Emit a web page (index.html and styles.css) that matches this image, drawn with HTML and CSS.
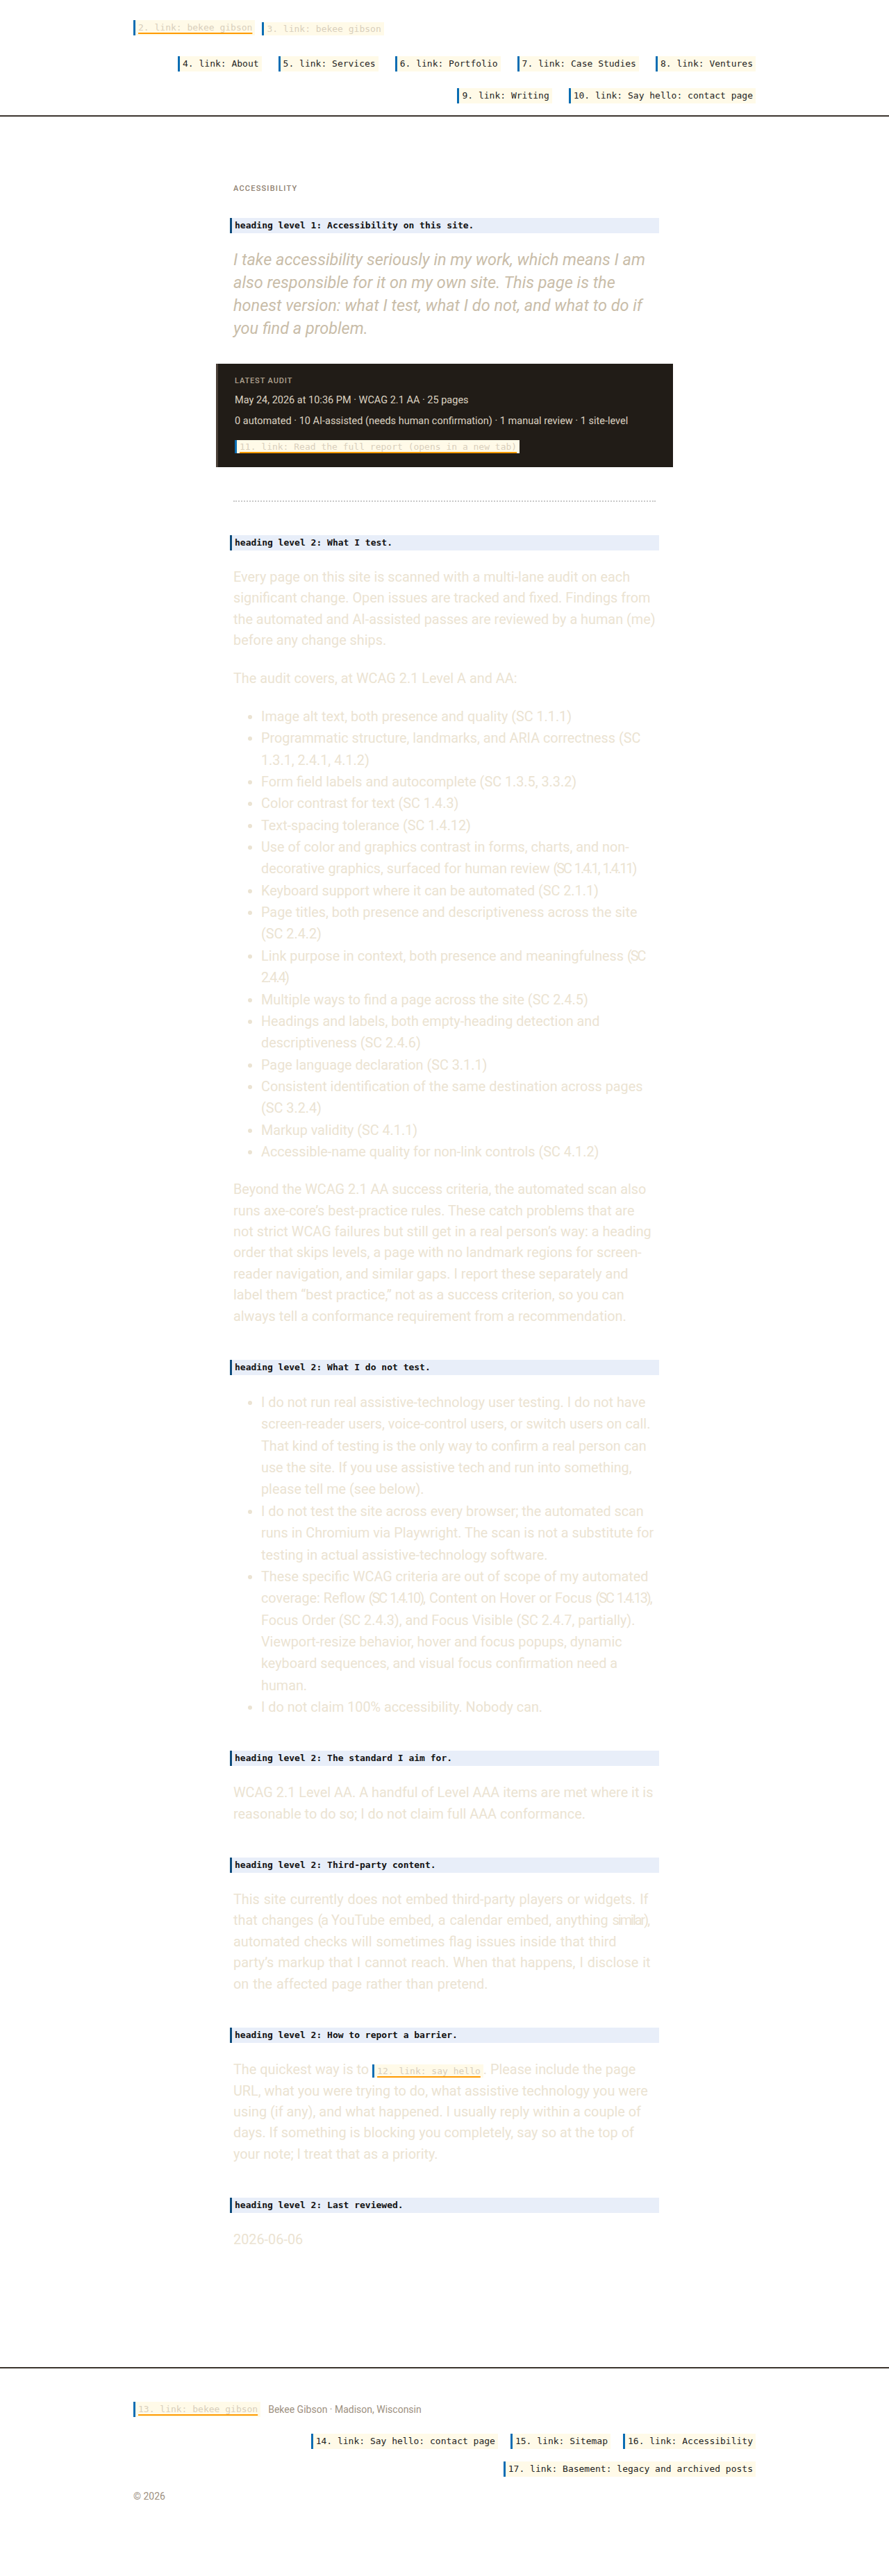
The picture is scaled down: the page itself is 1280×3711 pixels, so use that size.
FILE: index.html
```html
<!DOCTYPE html>
<html lang="en">
<head>
<meta charset="utf-8">
<title>Accessibility on this site</title>
<link rel="stylesheet" href="styles.css">
</head>
<body>
<header class="site-header">
  <div class="wrap">
    <div class="brand">
      <a class="sr-link faded ul" href="#">2. link: bekee gibson</a>
      <a class="sr-link faded brand-text" href="#">3. link: bekee gibson</a>
    </div>
    <nav class="nav">
      <a class="sr-link" href="#">4. link: About</a>
      <a class="sr-link" href="#">5. link: Services</a>
      <a class="sr-link" href="#">6. link: Portfolio</a>
      <a class="sr-link" href="#">7. link: Case Studies</a>
      <a class="sr-link" href="#">8. link: Ventures</a>
      <a class="sr-link" href="#">9. link: Writing</a>
      <a class="sr-link" href="#">10. link: Say hello: contact page</a>
    </nav>
  </div>
</header>

<main class="main">
  <div class="col">
    <p class="eyebrow">Accessibility</p>
    <h1 class="sr-heading">heading level 1: Accessibility on this site.</h1>
    <p class="lead">I take accessibility seriously in my work, which means I am also responsible for it on my own site. This page is the honest version: what I test, what I do not, and what to do if you find a problem.</p>

    <section class="audit">
      <p class="audit-label">Latest audit</p>
      <p class="audit-line">May 24, 2026 at 10:36 PM · WCAG 2.1 AA · 25 pages</p>
      <p class="audit-line second">0 automated · 10 AI-assisted (needs human confirmation) · 1 manual review · 1 site-level</p>
      <p class="audit-link"><a class="sr-link faded ul small" href="#">11. link: Read the full report (opens in a new tab)</a></p>
    </section>

    <hr class="rule">

    <h2 class="sr-heading">heading level 2: What I test.</h2>
    <p>Every page on this site is scanned with a multi-lane audit on each significant change. Open issues are tracked and fixed. Findings from the automated and AI-assisted passes are reviewed by a human (me) before any change ships.</p>
    <p>The audit covers, at WCAG 2.1 Level A and AA:</p>
    <ul>
      <li>Image alt text, both presence and quality (SC 1.1.1)</li>
      <li>Programmatic structure, landmarks, and ARIA correctness (SC 1.3.1, 2.4.1, 4.1.2)</li>
      <li>Form field labels and autocomplete (SC 1.3.5, 3.3.2)</li>
      <li>Color contrast for text (SC 1.4.3)</li>
      <li>Text-spacing tolerance (SC 1.4.12)</li>
      <li>Use of color and graphics contrast in forms, charts, and non-decorative graphics, surfaced for human review <span class="num">(SC 1.4.1, 1.4.11)</span></li>
      <li>Keyboard support where it can be automated (SC 2.1.1)</li>
      <li>Page titles, both presence and descriptiveness across the site (SC 2.4.2)</li>
      <li>Link purpose in context, both presence and meaningfulness <span class="num">(SC 2.4.4)</span></li>
      <li>Multiple ways to find a page across the site (SC 2.4.5)</li>
      <li>Headings and labels, both empty-heading detection and descriptiveness (SC 2.4.6)</li>
      <li>Page language declaration (SC 3.1.1)</li>
      <li>Consistent identification of the same destination across pages (SC 3.2.4)</li>
      <li>Markup validity (SC 4.1.1)</li>
      <li>Accessible-name quality for non-link controls (SC 4.1.2)</li>
    </ul>
    <p>Beyond the WCAG 2.1 AA success criteria, the automated scan also runs axe-core’s best-practice rules. These catch problems that are not strict WCAG failures but still get in a real person’s way: a heading order that skips levels, a page with no landmark regions for screen-reader navigation, and similar gaps. I report these separately and label them “best practice,” not as a success criterion, so you can always tell a conformance requirement from a recommendation.</p>

    <h2 class="sr-heading">heading level 2: What I do not test.</h2>
    <ul>
      <li>I do not run real assistive-technology user testing. I do not have screen-reader users, voice-control users, or switch users on call. That kind of testing is the only way to confirm a real person can use the site. If you use assistive tech and run into something, please tell me (see below).</li>
      <li>I do not test the site across every browser; the automated scan runs in Chromium via Playwright. The scan is not a substitute for testing in actual assistive-technology software.</li>
      <li>These specific WCAG criteria are out of scope of my automated coverage: Reflow <span class="num">(SC 1.4.10)</span>, Content on Hover or Focus <span class="num">(SC 1.4.13)</span>, Focus Order (SC 2.4.3), and Focus Visible (SC 2.4.7, partially). Viewport-resize behavior, hover and focus popups, dynamic keyboard sequences, and visual focus confirmation need a human.</li>
      <li>I do not claim 100% accessibility. Nobody can.</li>
    </ul>

    <h2 class="sr-heading">heading level 2: The standard I aim for.</h2>
    <p>WCAG 2.1 Level AA. A handful of Level AAA items are met where it is reasonable to do so; I do not claim full AAA conformance.</p>

    <h2 class="sr-heading">heading level 2: Third-party content.</h2>
    <p class="airy">This site currently does not embed third-party players or widgets. If that changes <span class="num">(a</span> YouTube embed, a calendar embed, anything <span class="num">similar),</span> automated checks will sometimes flag issues inside that third party’s markup that I cannot reach. When that happens, I disclose it on the affected page rather than pretend.</p>

    <h2 class="sr-heading">heading level 2: How to report a barrier.</h2>
    <p>The quickest way is to <a class="sr-link faded ul inline" href="#">12. link: say hello</a>. Please include the page URL, what you were trying to do, what assistive technology you were using (if any), and what happened. I usually reply within a couple of days. If something is blocking you completely, say so at the top of your note; I treat that as a priority.</p>

    <h2 class="sr-heading">heading level 2: Last reviewed.</h2>
    <p class="last">2026-06-06</p>
  </div>
</main>

<footer class="site-footer">
  <div class="wrap">
    <div class="foot-brand">
      <a class="sr-link faded ul" href="#">13. link: bekee gibson</a>
      <span class="foot-meta">Bekee Gibson · Madison, Wisconsin</span>
    </div>
    <nav class="foot-nav">
      <a class="sr-link" href="#">14. link: Say hello: contact page</a>
      <a class="sr-link" href="#">15. link: Sitemap</a>
      <a class="sr-link" href="#">16. link: Accessibility</a>
      <a class="sr-link" href="#">17. link: Basement: legacy and archived posts</a>
    </nav>
    <p class="copy">© 2026</p>
  </div>
</footer>
</body>
</html>
```

FILE: styles.css
```css
html, body {
  margin: 0;
  padding: 0;
  background: #ffffff;
}

body {
  font-family: Roboto, "Liberation Sans", Arial, sans-serif;
  color: #ebe3d2;
}

.wrap {
  width: 896px;
  margin: 0 auto;
}

/* screen-reader style link labels */
.sr-link {
  display: inline-block;
  font-family: "DejaVu Sans Mono", "Liberation Mono", monospace;
  font-size: 13px;
  line-height: 18px;
  padding: 2px 4px;
  background: #fffae8;
  border-left: 3px solid #0a6db3;
  color: #1e1e1e;
  text-decoration: none;
  white-space: nowrap;
  letter-spacing: 0;
  word-spacing: 0;
  font-style: normal;
}

.sr-link.faded {
  color: #d9cfbc;
}

.sr-link.ul {
  text-decoration: underline;
  text-decoration-color: #ff9a00;
  text-decoration-thickness: 2px;
  text-underline-offset: 3px;
}

.sr-link.small {
  line-height: 15px;
}

.sr-link.inline {
  display: inline;
  line-height: 1;
  padding: 2px 4px;
}

/* header */
.site-header {
  border-bottom: 2px solid #3b342e;
  padding: 29px 0 17px;
}

.brand {
  display: flex;
  align-items: center;
  gap: 10px;
  height: 22px;
}

.brand-text {
  margin-top: 3px;
  line-height: 15px;
}

.nav {
  display: flex;
  flex-wrap: wrap;
  justify-content: flex-end;
  gap: 24px;
  margin-top: 30px;
}

/* main column */
.main {
  padding: 96px 0 167px;
}

.col {
  width: 608px;
  margin: 0 auto;
}

.col p {
  margin-top: 0;
}

.col > p {
  font-size: 19.85px;
  line-height: 30.4px;
  margin: 0 0 24px;
}

.col > p.airy {
  word-spacing: 1px;
}

.col > p.eyebrow {
  margin: 0 0 34px;
  font-size: 11px;
  line-height: 16px;
  font-weight: 500;
  letter-spacing: 0.11em;
  text-transform: uppercase;
  color: #8f8170;
}

.col > p.lead {
  margin: 0 0 34px;
  font-size: 23.5px;
  line-height: 33px;
  font-style: italic;
  color: #c9bda9;
}

.col > p.last {
  margin-bottom: 0;
}

.num {
  letter-spacing: -0.1em;
  word-spacing: 0.1em;
}

.col ul {
  margin: 0 0 24px;
  padding-left: 40px;
  font-size: 19.8px;
  line-height: 31.35px;
}

.sr-heading {
  margin: 47px -5px 24px;
  padding: 2px 4px;
  font-family: "DejaVu Sans Mono", "Liberation Mono", monospace;
  font-size: 13px;
  line-height: 18px;
  font-weight: bold;
  background: #e8eef9;
  border-left: 3px solid #0f4c7c;
  color: #111111;
}

h1.sr-heading {
  margin-top: 0;
  margin-bottom: 22px;
}

/* audit card */
.audit {
  margin: 0 -25px;
  padding: 18px 24px 20px;
  background: #211c17;
  border-left: 3px solid #4a4038;
}

.audit p {
  margin: 0;
}

.audit-label {
  font-size: 11px;
  line-height: 14px;
  font-weight: 500;
  letter-spacing: 0.08em;
  text-transform: uppercase;
  color: #b0a390;
}

.audit .audit-line {
  margin-top: 10px;
  font-size: 14.5px;
  line-height: 22px;
  color: #ddd3c2;
}

.audit .audit-line.second {
  margin-top: 8px;
}

.audit .audit-link {
  margin-top: 16px;
  line-height: 0;
}

.rule {
  margin: 48px 0;
  height: 0;
  border: 0;
  border-top: 2px dotted #c9c9c9;
}

/* footer */
.site-footer {
  border-top: 2px solid #3b342e;
  padding: 48px 0 104px;
}

.foot-brand {
  display: flex;
  align-items: center;
  gap: 11px;
  height: 22px;
}

.foot-meta {
  font-size: 14px;
  line-height: 20px;
  color: #9d907f;
}

.foot-nav {
  display: flex;
  flex-wrap: wrap;
  justify-content: flex-end;
  gap: 18px;
  margin-top: 24px;
}

.copy {
  margin: 18px 0 0;
  font-size: 14px;
  line-height: 20px;
  color: #9d907f;
}
```
